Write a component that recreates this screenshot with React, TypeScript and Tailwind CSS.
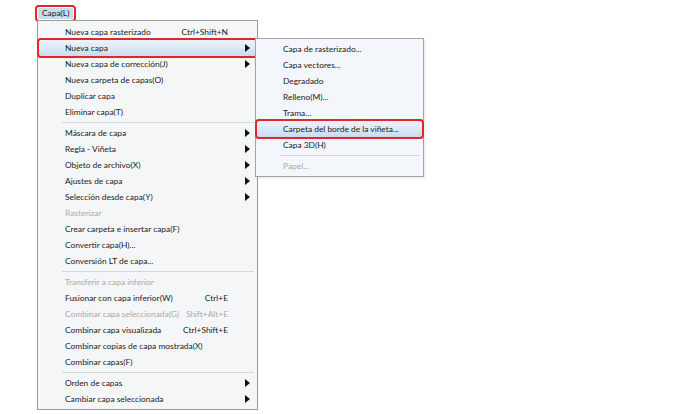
import type { ReactNode } from 'react'

type Item =
  | { type: 'sep' }
  | {
      type?: 'item'
      label: string
      shortcut?: string
      sub?: boolean
      disabled?: boolean
      active?: boolean
    }

const mainItems: Item[] = [
  { label: 'Nueva capa rasterizado', shortcut: 'Ctrl+Shift+N' },
  { label: 'Nueva capa', sub: true, active: true },
  { label: 'Nueva capa de corrección(J)', sub: true },
  { label: 'Nueva carpeta de capas(O)' },
  { label: 'Duplicar capa' },
  { label: 'Eliminar capa(T)' },
  { type: 'sep' },
  { label: 'Máscara de capa', sub: true },
  { label: 'Regla - Viñeta', sub: true },
  { label: 'Objeto de archivo(X)', sub: true },
  { label: 'Ajustes de capa', sub: true },
  { label: 'Selección desde capa(Y)', sub: true },
  { label: 'Rasterizar', disabled: true },
  { label: 'Crear carpeta e insertar capa(F)' },
  { label: 'Convertir capa(H)...' },
  { label: 'Conversión LT de capa...' },
  { type: 'sep' },
  { label: 'Transferir a capa inferior', disabled: true },
  { label: 'Fusionar con capa inferior(W)', shortcut: 'Ctrl+E' },
  { label: 'Combinar capa seleccionada(G)', shortcut: 'Shift+Alt+E', disabled: true },
  { label: 'Combinar capa visualizada', shortcut: 'Ctrl+Shift+E' },
  { label: 'Combinar copias de capa mostrada(X)' },
  { label: 'Combinar capas(F)' },
  { type: 'sep' },
  { label: 'Orden de capas', sub: true },
  { label: 'Cambiar capa seleccionada', sub: true },
]

const subItems: Item[] = [
  { label: 'Capa de rasterizado...' },
  { label: 'Capa vectores...' },
  { label: 'Degradado' },
  { label: 'Relleno(M)...' },
  { label: 'Trama...' },
  { label: 'Carpeta del borde de la viñeta...', active: true },
  { label: 'Capa 3D(H)' },
  { type: 'sep' },
  { label: 'Papel...', disabled: true },
]

function Arrow() {
  return (
    <svg width="5" height="8" viewBox="0 0 5 8" className="absolute right-[7px] top-[4px]">
      <path d="M0 0 L5 4 L0 8 Z" fill="#111" />
    </svg>
  )
}

function Row({ item }: { item: Item }) {
  if (item.type === 'sep') {
    return (
      <div className="h-[5px] flex items-center pl-[24px] pr-[3px]">
        <div className="h-px w-full bg-[#d7d7d7]" />
      </div>
    )
  }
  return (
    <div className="relative h-4">
      {item.active && (
        <div className="absolute -left-[1px] -right-[1px] -top-[2px] -bottom-[2px] rounded-[4px] border-2 border-[#e3262a] bg-gradient-to-b from-[#eef4fb] to-[#c9dcef]" />
      )}
      <div
        className={`relative flex h-4 items-center pl-[27px] pr-[29px] ${
          item.disabled ? 'text-[#a9a9a9]' : 'text-[#1b1b1b]'
        }`}
      >
        <span className="flex-1 whitespace-nowrap">{item.label}</span>
        {item.shortcut && <span className="whitespace-nowrap">{item.shortcut}</span>}
      </div>
      {item.sub && <Arrow />}
    </div>
  )
}

function Menu({ items, className, children }: { items: Item[]; className: string; children?: ReactNode }) {
  return (
    <div className={className}>
      {items.map((it, i) => (
        <Row key={i} item={it} />
      ))}
      {children}
    </div>
  )
}

export default function App() {
  return (
    <div
      className="relative h-[414px] w-[697px] bg-white text-[8.4px] leading-none"
      style={{ fontFamily: 'Lato, "Noto Sans", sans-serif' }}
    >
      <div className="pl-[35px] pt-[5px]">
        <div className="inline-flex rounded-[4px] border-2 border-[#e3262a] p-px">
          <div className="flex h-[11px] items-center bg-[#c5dcf1] px-[4px] text-[#1b1b1b]">Capa(L)</div>
        </div>
      </div>

      <div className="relative ml-[37px] -mt-[2px] w-[221px]">
        <Menu
          items={mainItems}
          className="border border-[#9c9c9c] bg-[#f5f6f8] pb-[2px] pt-[3px]"
        />
        <div className="absolute left-[218px] top-[18px] w-[169px] border border-[#a4a4a4] bg-[#f3f6fb] pb-[2px] pt-[2px] shadow-[1px_1px_2px_rgba(0,0,0,0.1)]">
          {subItems.map((it, i) => (
            <Row key={i} item={it} />
          ))}
        </div>
      </div>
    </div>
  )
}
